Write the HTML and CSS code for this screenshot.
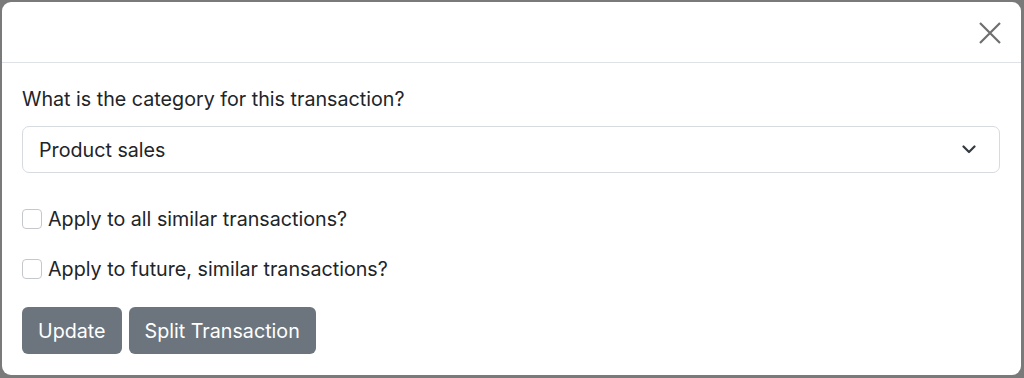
FILE: index.html
```html
<!DOCTYPE html>
<html lang="en">
<head>
<meta charset="utf-8">
<title>Categorize transaction</title>
<link rel="stylesheet" href="styles.css">
</head>
<body>
<div class="modal">
  <div class="modal-header">
    <button class="btn-close" type="button" aria-label="Close">
      <svg width="22" height="22" viewBox="0 0 22 22"><path d="M1 1 L21 21 M21 1 L1 21" stroke="#6f6f6f" stroke-width="2.2" fill="none"/></svg>
    </button>
  </div>
  <div class="modal-body">
    <label class="form-label">What is the category for this transaction?</label>
    <div class="select">
      <span>Product sales</span>
      <svg class="chev" width="14" height="9" viewBox="0 0 14 9"><path d="M1.5 1.5 L7 7 L12.5 1.5" stroke="#343a40" stroke-width="2.2" fill="none" stroke-linecap="round" stroke-linejoin="round"/></svg>
    </div>
    <div class="form-check first">
      <span class="box"></span>
      <span class="check-label">Apply to all similar transactions?</span>
    </div>
    <div class="form-check">
      <span class="box"></span>
      <span class="check-label">Apply to future, similar transactions?</span>
    </div>
    <div class="actions">
      <button class="btn" type="button">Update</button>
      <button class="btn" type="button">Split Transaction</button>
    </div>
  </div>
</div>
</body>
</html>
```
FILE: styles.css
```css
html, body {
  margin: 0;
  height: 100%;
}
body {
  background: #7a7a7a;
  padding: 2px 3px 3px 2px;
  box-sizing: border-box;
  font-family: Inter, "Liberation Sans", sans-serif;
  color: #212529;
}
.modal {
  background: #fff;
  border-radius: 9px;
  height: 100%;
  display: flex;
  flex-direction: column;
}
.modal-header {
  height: 61px;
  flex: none;
  border-bottom: 1px solid #dee2e6;
  display: flex;
  justify-content: flex-end;
  align-items: flex-start;
  padding: 20px 20px 0 0;
  box-sizing: border-box;
}
.btn-close {
  border: 0;
  background: none;
  padding: 0;
  width: 22px;
  height: 22px;
  cursor: pointer;
}
.btn-close svg { display: block; }
.modal-body {
  padding: 21px 21px 20px 20px;
  display: flex;
  flex-direction: column;
}
.form-label {
  font-size: 19.7px;
  line-height: 30px;
  margin-bottom: 12px;
}
.select {
  height: 47px;
  flex: none;
  border: 1px solid #d7dbdf;
  border-radius: 7px;
  box-sizing: border-box;
  display: flex;
  align-items: center;
  justify-content: space-between;
  padding: 0 23px 0 16px;
  font-size: 19.7px;
}
.chev { display: block; }
.form-check {
  display: flex;
  align-items: center;
  height: 30px;
  margin-top: 20px;
  font-size: 19.7px;
}
.form-check.first { margin-top: 31px; }
.box {
  width: 18px;
  height: 18px;
  border: 1px solid #c4c8cc;
  border-radius: 4px;
  margin-right: 6px;
  flex: none;
}
.actions {
  display: flex;
  gap: 7px;
  margin-top: 23px;
}
.btn {
  height: 47px;
  background: #6c757d;
  color: #fff;
  border: 0;
  border-radius: 6px;
  font-family: inherit;
  font-size: 19.7px;
  padding: 0 16px;
}
```
